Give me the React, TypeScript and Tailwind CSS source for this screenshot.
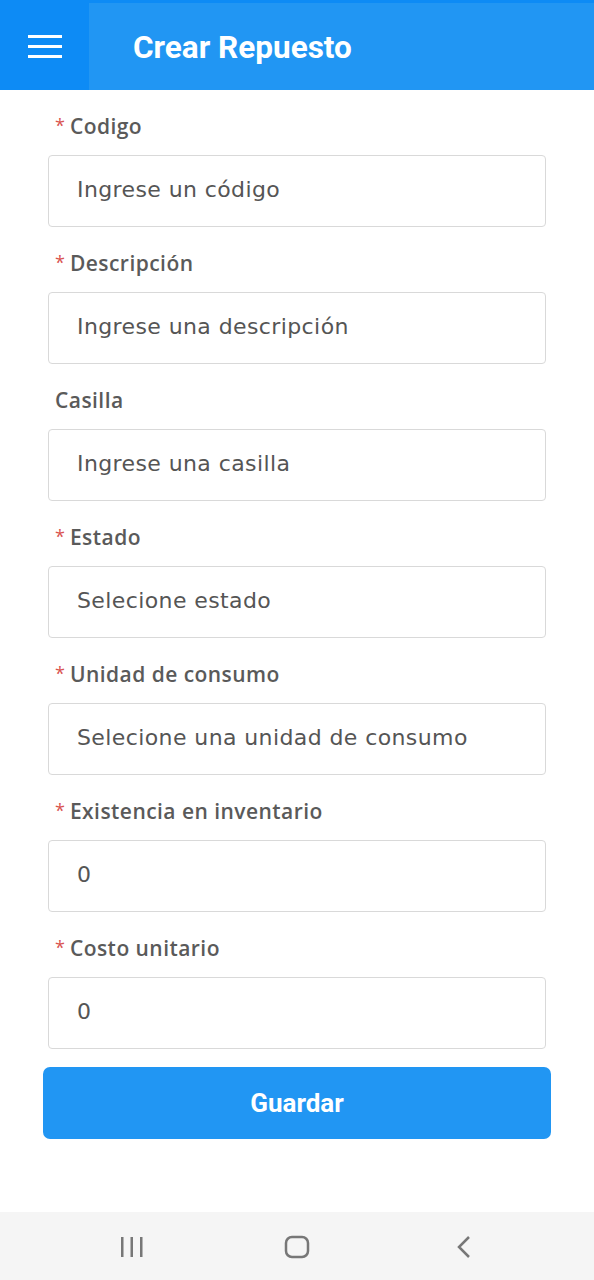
import React from "react";

const fields: { label: string; placeholder: string; required: boolean }[] = [
  { label: "Codigo", placeholder: "Ingrese un código", required: true },
  { label: "Descripción", placeholder: "Ingrese una descripción", required: true },
  { label: "Casilla", placeholder: "Ingrese una casilla", required: false },
  { label: "Estado", placeholder: "Selecione estado", required: true },
  { label: "Unidad de consumo", placeholder: "Selecione una unidad de consumo", required: true },
  { label: "Existencia en inventario", placeholder: "0", required: true },
  { label: "Costo unitario", placeholder: "0", required: true },
];

export default function App() {
  return (
    <div className="w-[594px] h-[1280px] bg-white flex flex-col" style={{ fontFamily: "'DejaVu Sans', sans-serif" }}>
      <header className="h-[90px] flex flex-col bg-[#2196f3]">
        <div className="h-[3px] bg-[#0d8bf5]" />
        <div className="flex flex-1">
          <div className="w-[89px] bg-[#0d8bf5] flex items-center justify-center">
            <svg width="34" height="23" viewBox="0 0 34 23">
              <rect x="0" y="0" width="34" height="3" fill="white" />
              <rect x="0" y="10" width="34" height="3" fill="white" />
              <rect x="0" y="20" width="34" height="3" fill="white" />
            </svg>
          </div>
          <div className="flex items-center pl-[44px] pt-[3px]">
            <span className="text-white font-bold text-[31.5px]" style={{ fontFamily: "Roboto, sans-serif" }}>
              Crear Repuesto
            </span>
          </div>
        </div>
      </header>

      <main className="flex-1 flex flex-col px-[48px] pt-[23px]">
        {fields.map((f) => (
          <div key={f.label} className="flex flex-col mb-[23px]">
            <div
              className="flex items-center h-[28px] pl-[7px] mb-[14px]"
              style={{ fontFamily: "'Open Sans', sans-serif" }}
            >
              {f.required && <span className="text-[#d9534f] text-[18px] mr-[5px] mt-[-3px]">*</span>}
              <span className="text-[21px] font-semibold tracking-[0.45px] text-[#5a5a5a]">{f.label}</span>
            </div>
            <div className="h-[72px] border border-[#d9d9d9] rounded-[4px] flex items-center pl-[28px] pb-[3px]">
              <span className="text-[22px] tracking-[0.4px] text-[#555]">{f.placeholder}</span>
            </div>
          </div>
        ))}
        <button
          className="mx-[-5px] mt-[-5px] h-[72px] rounded-[7px] bg-[#2196f3] text-white text-[26px] font-bold"
          style={{ fontFamily: "Roboto, sans-serif" }}
        >
          Guardar
        </button>
      </main>

      <nav className="h-[68px] bg-[#f5f5f5] flex items-center justify-between px-[120px] pt-[2px]">
        <svg width="24" height="24" viewBox="0 0 24 24">
          <rect x="1" y="2" width="2.5" height="20" fill="#777" />
          <rect x="10.5" y="2" width="2.5" height="20" fill="#777" />
          <rect x="20" y="2" width="2.5" height="20" fill="#777" />
        </svg>
        <svg width="26" height="24" viewBox="0 0 26 24">
          <rect x="2" y="2" width="22" height="20" rx="6" fill="none" stroke="#777" strokeWidth="2.5" />
        </svg>
        <svg width="24" height="24" viewBox="0 0 24 24">
          <path d="M19 2 L9 12 L19 22" fill="none" stroke="#777" strokeWidth="2.5" />
        </svg>
      </nav>
    </div>
  );
}
